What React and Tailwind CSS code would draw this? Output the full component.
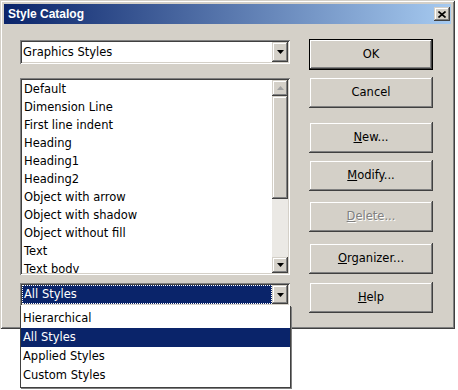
import React from "react";

const sunken =
  "shadow-[inset_1px_1px_#808080,inset_-1px_-1px_#ffffff,inset_2px_2px_#404040,inset_-2px_-2px_#d4d0c8]";
const sbtn =
  "shadow-[inset_-1px_-1px_#404040,inset_1px_1px_#d4d0c8,inset_-2px_-2px_#808080,inset_2px_2px_#ffffff]";

function Arrow({ up = false, color = "#000" }) {
  return (
    <svg width="7" height="4" viewBox="0 0 7 4" className="block">
      {up ? (
        <polygon points="3.5,0 7,4 0,4" fill={color} />
      ) : (
        <polygon points="0,0 7,0 3.5,4" fill={color} />
      )}
    </svg>
  );
}

function DropBtn() {
  return (
    <div className={`w-[16px] h-[20px] bg-[#d4d0c8] flex items-center justify-center ${sbtn}`}>
      <Arrow />
    </div>
  );
}

function Btn({ children, className = "", def = false }) {
  return (
    <div
      className={`h-[31px] w-[124px] bg-[#d4d0c8] flex items-center justify-center text-[11.5px] text-black ${
        def
          ? "shadow-[inset_0_0_0_1px_#000,inset_-2px_-2px_#404040,inset_2px_2px_#ffffff,inset_-3px_-3px_#808080]"
          : sbtn
      } ${className}`}
    >
      {children}
    </div>
  );
}

const items = [
  "Default",
  "Dimension Line",
  "First line indent",
  "Heading",
  "Heading1",
  "Heading2",
  "Object with arrow",
  "Object with shadow",
  "Object without fill",
  "Text",
  "Text body",
];

export default function App() {
  return (
    <div className="w-[458px] h-[390px] bg-white relative font-['DejaVu_Sans',sans-serif] text-[11.5px] text-black">
      <div
        className={`w-[455px] h-[329px] bg-[#d4d0c8] p-[4px] flex flex-col shadow-[inset_1px_1px_#d4d0c8,inset_-1px_-1px_#404040,inset_2px_2px_#ffffff,inset_-2px_-2px_#808080]`}
      >
        <div className="h-[20px] shrink-0 flex items-center justify-between bg-[linear-gradient(to_right,#0a246a,#a6caf0)] pl-[4px] pr-[1px]">
          <span className="font-['Liberation_Sans',sans-serif] font-bold text-[12px] text-white leading-none">
            Style Catalog
          </span>
          <div className={`w-[16px] h-[14px] bg-[#d4d0c8] flex items-center justify-center ${sbtn}`}>
            <svg width="8" height="7" viewBox="0 0 8 7">
              <path d="M0.5 0.5 L7.5 6.5 M7.5 0.5 L0.5 6.5" stroke="#000" strokeWidth="1.6" />
            </svg>
          </div>
        </div>
        <div className="flex pl-[16px] gap-[19px]">
          <div className="w-[270px] flex flex-col pt-[16px]">
            <div className={`h-[24px] bg-white flex items-center justify-between pl-[3px] pr-[2px] ${sunken}`}>
              <span className="pt-[1px]">Graphics Styles</span>
              <DropBtn />
            </div>
            <div className={`mt-[14px] h-[197px] bg-white flex p-[2px] ${sunken}`}>
              <div className="flex-1 overflow-hidden pl-[2px]">
                {items.map((t) => (
                  <div key={t} className="h-[18px] leading-[18px] whitespace-nowrap">
                    {t}
                  </div>
                ))}
              </div>
              <div className="w-[16px] flex flex-col bg-[#ebe9e5]">
                <div className={`h-[16px] bg-[#d4d0c8] flex items-center justify-center ${sbtn}`}>
                  <Arrow up color="#a0a0a0" />
                </div>
                <div className={`h-[103px] bg-[#d4d0c8] ${sbtn}`} />
                <div className="flex-1" />
                <div className={`h-[16px] bg-[#d4d0c8] flex items-center justify-center ${sbtn}`}>
                  <Arrow />
                </div>
              </div>
            </div>
            <div className={`mt-[8px] h-[23px] bg-white flex items-center justify-between p-[2px] ${sunken}`}>
              <div className="flex-1 h-full bg-[#0a246a] text-white flex items-center pl-[2px] outline-1 outline-dotted outline-[#ffffff] -outline-offset-1">
                All Styles
              </div>
              <div className={`w-[16px] h-[19px] bg-[#d4d0c8] flex items-center justify-center ${sbtn}`}>
                <Arrow />
              </div>
            </div>
          </div>
          <div className="w-[124px] flex flex-col">
            <Btn def className="mt-[15px]">OK</Btn>
            <Btn className="mt-[7px]">Cancel</Btn>
            <Btn className="mt-[14px]">
              <span><span className="underline">N</span>ew...</span>
            </Btn>
            <Btn className="mt-[7px]">
              <span><span className="underline">M</span>odify...</span>
            </Btn>
            <Btn className="mt-[10px]">
              <span className="text-[#808080] [text-shadow:1px_1px_#ffffff]">
                <span className="underline">D</span>elete...
              </span>
            </Btn>
            <Btn className="mt-[11px]">
              <span><span className="underline">O</span>rganizer...</span>
            </Btn>
            <Btn className="mt-[8px]">
              <span><span className="underline">H</span>elp</span>
            </Btn>
          </div>
        </div>
      </div>
      <div className="absolute left-[20px] top-[306px] w-[271px] h-[82px] bg-white border border-[#404040] border-t-0 shadow-[1px_1px_0_#808080] pt-[3px]">
        <div className="h-[19px] leading-[19px] pl-[2px]">Hierarchical</div>
        <div className="h-[19px] leading-[19px] pl-[2px] bg-[#0a246a] text-white">All Styles</div>
        <div className="h-[19px] leading-[19px] pl-[2px]">Applied Styles</div>
        <div className="h-[19px] leading-[19px] pl-[2px]">Custom Styles</div>
      </div>
    </div>
  );
}
